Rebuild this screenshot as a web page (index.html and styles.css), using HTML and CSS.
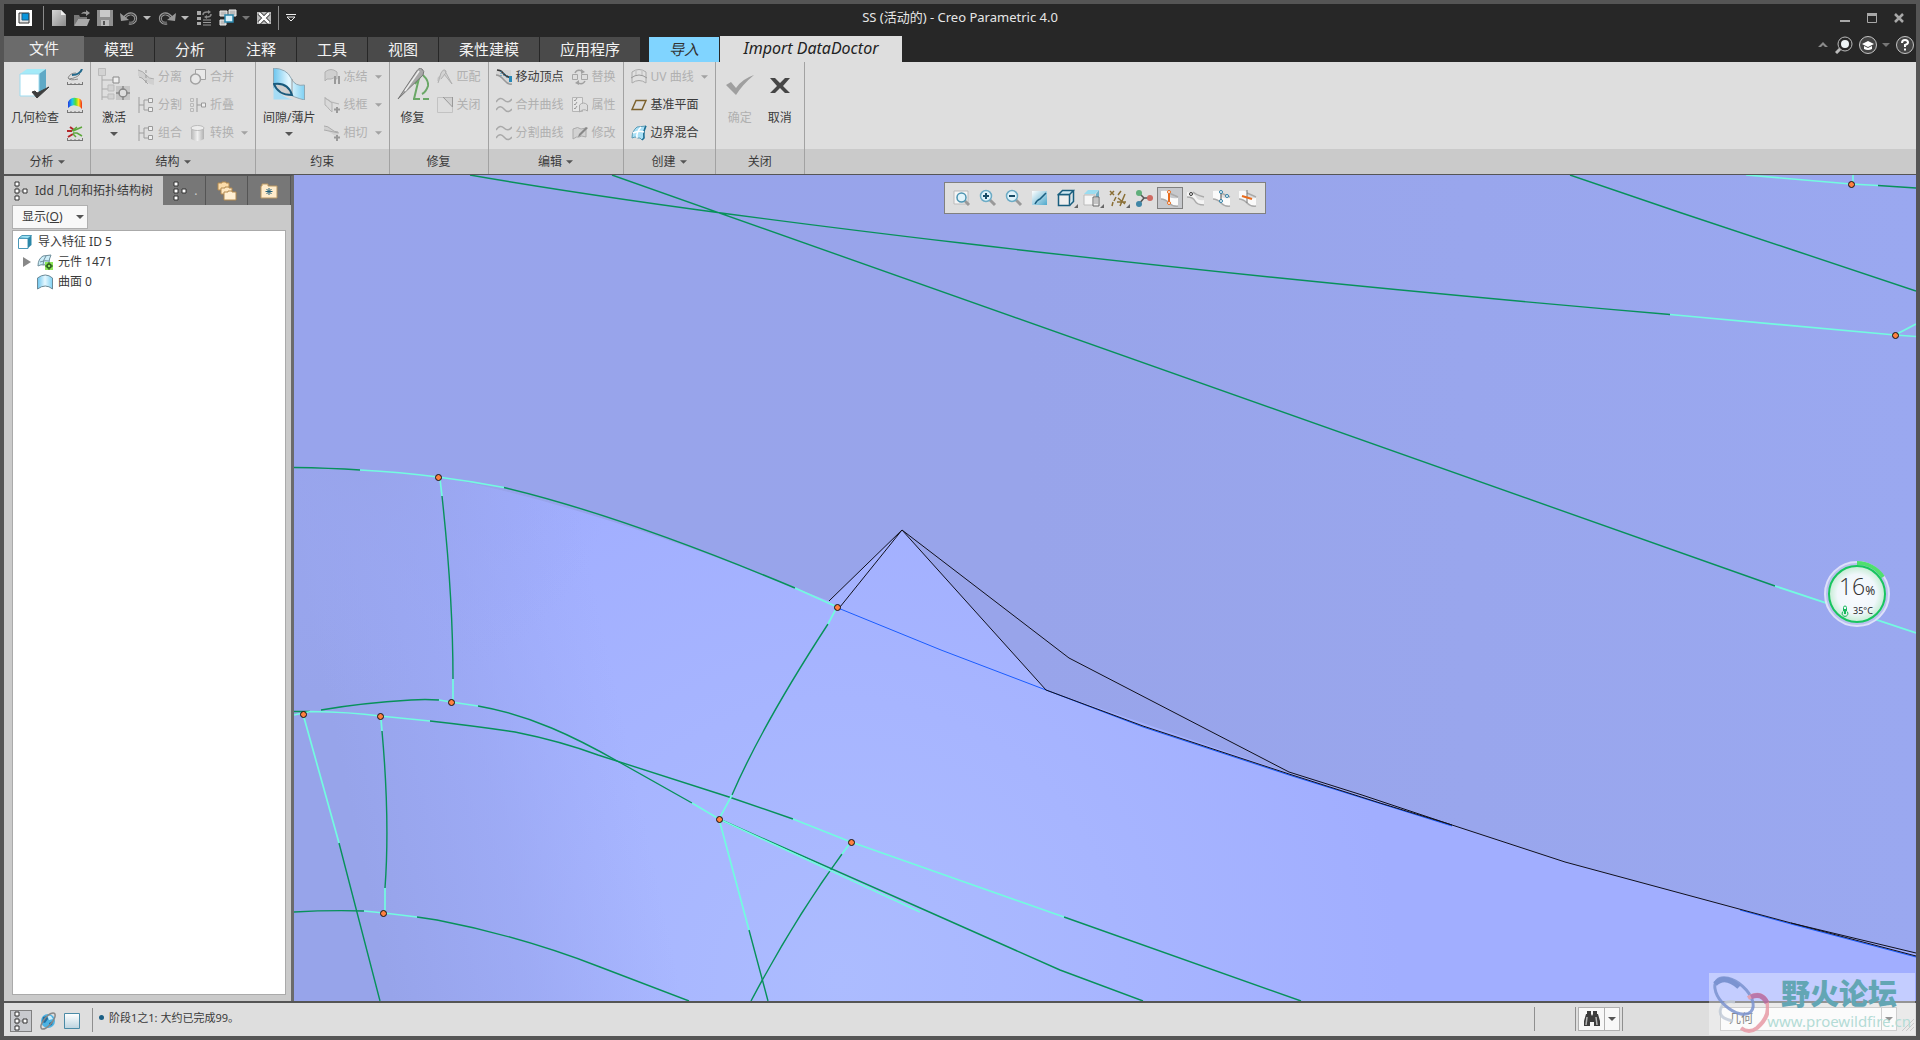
FILE: index.html
```html
<!DOCTYPE html>
<html lang="zh-CN">
<head>
<meta charset="utf-8">
<title>SS (活动的) - Creo Parametric 4.0</title>
<link rel="stylesheet" href="styles.css">
</head>
<body>
<svg class="defs" aria-hidden="true">
  <defs>
    <linearGradient id="g-sky" x1="0" x2="1"><stop offset="0" stop-color="#6cc5ee"/><stop offset=".5" stop-color="#e6f8ff"/><stop offset="1" stop-color="#7fd0f2"/></linearGradient>
    <linearGradient id="g-rain" x1="0" x2="1"><stop offset="0" stop-color="#2038e0"/><stop offset=".3" stop-color="#18c8f0"/><stop offset=".55" stop-color="#58e030"/><stop offset=".75" stop-color="#ffe020"/><stop offset="1" stop-color="#f02818"/></linearGradient>
    <linearGradient id="g-gray" x1="0" x2="1"><stop offset="0" stop-color="#b5b5b5"/><stop offset=".5" stop-color="#f0f0f0"/><stop offset="1" stop-color="#b0b0b0"/></linearGradient>
    <linearGradient id="g-doc" x1="0" y1="0" x2="1" y2="1"><stop offset="0" stop-color="#d6d6d6"/><stop offset="1" stop-color="#8c8c8c"/></linearGradient>
    <linearGradient id="g-pane" x1="0" y1="0" x2="0" y2="1"><stop offset="0" stop-color="#fff"/><stop offset="1" stop-color="#bcd3df"/></linearGradient>
    <linearGradient id="g-paint" x1="0" y1="0" x2="1" y2="1"><stop offset="0" stop-color="#fff"/><stop offset="1" stop-color="#4fa9cc"/></linearGradient>
  </defs>
  <symbol id="arrow" viewBox="0 0 8 4"><path d="M0 0h8L4 4z" fill="currentColor"/></symbol>
  <symbol id="app" viewBox="0 0 16 16"><path d="M0 0h16v16H0z" fill="#fff"/><path d="M3 3h10v10H3z" fill="#e4e4e4" stroke="#333"/><path d="M6 3.500h6.500V10H6z" fill="#0a96dc" stroke="#1c5f86"/></symbol>
  <symbol id="new" viewBox="0 0 16 16"><path d="M1 0h9l5 5v11H1z" fill="url(#g-doc)"/><path d="M10 0v5h5z" fill="#eee"/></symbol>
  <symbol id="open" viewBox="0 0 16 16"><path d="M0 5h5l1 2h7v2H4L1 15H0z" fill="#777"/><path d="M4 9h12l-3 7H0z" fill="#a9a9a9"/><path d="M7 4q2-3 5-2V0l4 3-4 3V4q-2-1-5 0z" fill="#999"/></symbol>
  <symbol id="save" viewBox="0 0 16 16"><path d="M0 0h16v16H0z" fill="#8f8f8f"/><path d="M3 0h10v7H3z" fill="#c9c9c9"/><path d="M4 10h8v6H4z" fill="#bcbcbc"/><path d="M6 11h2v4H6z" fill="#555"/></symbol>
  <symbol id="undo" viewBox="0 0 18 16"><path d="M4 8Q8 3 12 4q5 2 3 7-2 3-6 2" fill="none" stroke="#999" stroke-width="3"/><path d="M4 8Q8 3 12 4q5 2 3 7-2 3-6 2" fill="none" stroke="#333" stroke-width="1"/><path d="M0 3l1 8 8-1z" fill="#999"/></symbol>
  <symbol id="regen" viewBox="0 0 16 16"><path d="M1 1h4v4H1zM1 7h4v3H1zM1 12h4v3H1z" fill="#aaa"/><path d="M7 10h8M7 12.500h8M7 15h8" stroke="#999"/><path d="M7 5q0-3 4-3h2M15 4q0 3-4 3" fill="none" stroke="#8b8b8b" stroke-width="1.500"/><path d="M12 0l3 2-3 2zM11 5L8 7l3 2z" fill="#8b8b8b"/></symbol>
  <symbol id="wins" viewBox="0 0 18 18"><path d="M1 2h7v5H1zM10 1h7v6h-7zM1 11h6v5H1z" fill="#bbb" stroke="#eee"/><path d="M6 6h8v7H6z" fill="#d9f1fb" stroke="#2b86ac" stroke-width="1.500"/></symbol>
  <symbol id="closew" viewBox="0 0 14 14"><path d="M0 1h14v12H0z" fill="#bbb"/><path d="M2 2l10 10M12 2L2 12" stroke="#222" stroke-width="4"/><path d="M2 2l10 10M12 2L2 12" stroke="#fff" stroke-width="2.500"/></symbol>
  <symbol id="custom" viewBox="0 0 10 8"><path d="M0 .5h10" stroke="#eee"/><path d="M1 3h8L5 7z" fill="none" stroke="#eee"/></symbol>

  <symbol id="check3d" viewBox="0 0 32 32"><path d="M1 6l7-5h19l-7 5z" fill="#a4eaf8"/><path d="M20 6l7-5v19l-7 8z" fill="#5fa9c6"/><path d="M1 6h19v22H1z" fill="#fff" stroke="#9edcf0"/><path d="M13 24l5 6L30 19l-12 6-2-2z" fill="#3d3d3d" stroke="#3d3d3d"/></symbol>
  <symbol id="ruler1" viewBox="0 0 16 16"><path d="M0 15.500h16M.5 13v2M4 14v1M8 14v1M12 14v1M15.500 13v2" stroke="#777"/><path d="M1 9Q3 4 9 4M2 10q8-1 11-5M1 9q2 3 10 1" fill="none" stroke="#888"/><path d="M5 6q8 0 10-6" fill="none" stroke="#23698c" stroke-width="2"/></symbol>
  <symbol id="ruler2" viewBox="0 0 16 16"><path d="M0 15.500h16M.5 13v2M4 14v1M8 14v1M12 14v1M15.500 13v2" stroke="#777"/><path d="M1 11V5q3-5 8-4 6 0 6 5v6q-2-3-5-3-5-2-9 2z" fill="url(#g-rain)"/></symbol>
  <symbol id="ruler3" viewBox="0 0 16 16"><path d="M0 15.500h16M.5 13v2M4 14v1M8 14v1M12 14v1M15.500 13v2" stroke="#777"/><path d="M0 6h5M3 2l4 3M1 12l5-3" stroke="#b3262a" stroke-width="2"/><path d="M5 6l5-4M6 6l9-4M6 8h4l5 3M6 9l3 3" fill="none" stroke="#5da83c" stroke-width="1.500"/></symbol>
  <symbol id="activate" viewBox="0 0 32 32"><path d="M4 8v24M4 12h11M4 21h6M4 29h6" fill="none" stroke="#aaa"/><path d="M.5.5h7v7h-7zM10 17h6v6h-6zM10 26h6v5h-6z" fill="#d2d2d2" stroke="#bbb"/><path d="M15 9h6v6h-6z" fill="#eee" stroke="#888"/><path d="M18 18h14v14H18z" fill="#c6c6c6"/><circle cx="25" cy="25" r="4" fill="#ddd" stroke="#888" stroke-width="1.500"/><path d="M25 18v4M25 28v4M18 25h4M28 25h4" stroke="#888" stroke-width="1.500"/></symbol>
  <symbol id="quilt" viewBox="0 0 16 16"><path d="M0 1q5 1 8 5t8 5v5q-4 0-7-3L4 9Q2 7 0 7z" fill="#d0d0d0"/><path d="M0 1q5 1 8 5t8 4M1 8q3 0 6 4l3 3" fill="none" stroke="#aaa"/><path d="M8 1v15" stroke="#999" stroke-dasharray="3 2"/></symbol>
  <symbol id="split" viewBox="0 0 16 16"><path d="M1 0v16M1 8h5M6 3v10M6 3h4M6 13h4" fill="none" stroke="#9c9c9c"/><path d="M10.500 1.500h4v4h-4zM10.500 10.500h4v4h-4z" fill="#eee" stroke="#999"/></symbol>
  <symbol id="fold" viewBox="0 0 16 16"><path d="M.5 1.500h3v3h-3zM.5 6.500h3v3h-3zM.5 11.500h3v3h-3z" fill="none" stroke="#b8b8b8"/><path d="M7 1v14M7 8h5" stroke="#999"/><path d="M11.500 6h4v4h-4z" fill="#eee" stroke="#999"/></symbol>
  <symbol id="union" viewBox="0 0 16 16"><path d="M5.500.5h10v10h-10z" fill="#e8e8e8" stroke="#a2a2a2"/><circle cx="5.500" cy="10" r="5" fill="#e8e8e8" stroke="#a2a2a2" stroke-width="1.500"/></symbol>
  <symbol id="cyl" viewBox="0 0 16 16"><path d="M1 3v11q7 4 13 0V3z" fill="url(#g-gray)"/><ellipse cx="7.500" cy="3" rx="6.500" ry="2.500" fill="#ececec" stroke="#bbb"/></symbol>
  <symbol id="gap" viewBox="0 0 32 32"><path d="M.5 0Q14 1 18 10t13.500 7v15Q20 29 16 26q-8-3-15.500-6z" fill="url(#g-sky)" stroke="#8fa7b3"/><path d="M.5 17v14.500H22Q9 31 .5 17z" fill="#a5dcf5"/><path d="M19 11v15" stroke="#9a9a9a"/><path d="M1 16q14-2 18 11Q5 27 1 16z" fill="#cfcfcf" stroke="#195a7d" stroke-width="2"/></symbol>
  <symbol id="freeze" viewBox="0 0 16 16"><path d="M1 3q6-5 12 0v7q-4-2-6 0H3l-2 2z" fill="#cfcfcf" stroke="#b0b0b0"/><path d="M10 7h2v8h-2zM14 7h2v8h-2z" fill="#9a9a9a"/></symbol>
  <symbol id="wire" viewBox="0 0 16 16"><path d="M1 0v8q2 1 4 4l3 3V6Q5 3 1 1l6 4 8 2" fill="#d9d9d9" stroke="#b3b3b3"/><path d="M10 12.500h6M13 10v6" stroke="#999" stroke-width="2"/></symbol>
  <symbol id="tangent" viewBox="0 0 16 16"><path d="M0 1q4 0 7 3t7 3v4q-4 0-7-3T0 5z" fill="#d0d0d0"/><path d="M0 5l15 3M0 1q4 0 7 3t7 3" fill="none" stroke="#aaa"/><path d="M10 12.500h6M13 10v6" stroke="#999" stroke-width="2"/></symbol>
  <symbol id="repair" viewBox="0 0 32 32"><path d="M23 5q9 6 8 13-2 6-6 8M23 6l-6 25" fill="none" stroke="#6aa766" stroke-width="2"/><path d="M16 31h7M26 31h6M18 16l6-8" stroke="#6aa766" stroke-width="2"/><path d="M1 31L19 4q3-5 6-3t1 6z" fill="#a8a8a8" stroke="#777"/><path d="M22 3L8 23" stroke="#eee" stroke-width="1.500"/></symbol>
  <symbol id="match" viewBox="0 0 16 16"><path d="M1 14L4 4q2-4 4-3t0 4l-4 5M7 5l8 10L8 2" fill="#d2d2d2" stroke="#b0b0b0"/><path d="M4 6q-4 2-3 6" fill="none" stroke="#b8b8b8"/></symbol>
  <symbol id="closebox" viewBox="0 0 16 16"><path d="M.5.5h15v15H.5z" fill="#ddd" stroke="#c2c2c2"/><path d="M6 0h10v10z" fill="#d0d0d0"/><path d="M6 0l9.500 10V0z" fill="none" stroke="#999"/></symbol>
  <symbol id="vertex" viewBox="0 0 16 16"><path d="M0 1h15v14q-4-1-7-4T0 7z" fill="#d5d5d5"/><path d="M0 6q4 0 8 5t8 4" fill="none" stroke="#999" stroke-width="1.500"/><path d="M1 1q4 0 6 3t8 5" fill="none" stroke="#3a3a3a" stroke-width="1.500"/><path d="M5 2v5M8 4v4M11 6v4" stroke="#2983b0" stroke-dasharray="1 1"/><path d="M13 7h3v6h-3z" fill="#2588b8"/></symbol>
  <symbol id="curves" viewBox="0 0 16 16"><path d="M0 5q4-6 8-2t8-1M0 13q4-6 8-1t8 0" fill="none" stroke="#a9a9a9" stroke-width="1.500"/></symbol>
  <symbol id="replace" viewBox="0 0 16 16"><path d="M.5 5.500h5v5h-5zM9.500 5.500h6v5h-6z" fill="#ddd" stroke="#a7a7a7"/><path d="M3 4q2-4 7-2M13 12q-2 4-7 2" fill="none" stroke="#a0a0a0" stroke-width="1.500"/><path d="M9 0l4 3-4 2zM7 11l-4 3 4 2z" fill="#a0a0a0"/></symbol>
  <symbol id="props" viewBox="0 0 16 16"><path d="M.5.5h10v14H.5z" fill="#e6e6e6" stroke="#b5b5b5"/><path d="M2 3l1 1 2-3M2 7l1 1 2-3M2 11l1 1 2-3" fill="none" stroke="#999"/><path d="M7.500 8q4-4 8 0v6q-4-3-8 1z" fill="#ddd" stroke="#aaa"/></symbol>
  <symbol id="modify" viewBox="0 0 16 16"><path d="M1 4q5-3 8 0l5-1v9q-5-2-7 0-2-1-6 2z" fill="#d2d2d2" stroke="#aaa"/><path d="M16 3L8 11l-2 1 1-3 7-7z" fill="#888"/></symbol>
  <symbol id="uv" viewBox="0 0 16 16"><path d="M1 3q7-5 14 0v11q-7-5-14 0z" fill="#e0e0e0" stroke="#aaa"/><path d="M0 9q8-6 16 0" fill="none" stroke="#999"/><path d="M5 2v4M11 2v4" stroke="#bbb"/></symbol>
  <symbol id="plane" viewBox="0 0 16 16"><path d="M5 3.500h10L11 12.500H1z" fill="none" stroke="#7d622d" stroke-width="1.500"/></symbol>
  <symbol id="blend" viewBox="0 0 16 16"><path d="M1 13q0-7 5-11l9-1q-3 5-2 12l-2 2q-2-3-4-2l-3-1z" fill="#a9e0f6" stroke="#5b9ab4"/><path d="M15 1q-3 5-2 12l-2 2" fill="none" stroke="#1d6d92" stroke-width="1.500"/><path d="M2 8q6-3 11-1M6 13Q5 7 10 2" fill="none" stroke="#fff" stroke-width="1.500"/></symbol>
  <symbol id="ok" viewBox="0 0 32 32"><path d="M2 17l5-3 5 6Q18 11 30 7 19 16 12 27z" fill="#9f9f9f"/></symbol>
  <symbol id="cancel" viewBox="0 0 32 32"><path d="M6 10h5l5 5 5-5h5l-7 8 7 7h-5l-5-5-5 5H6l7-7z" fill="#454545"/></symbol>

  <symbol id="tree" viewBox="0 0 16 20"><path d="M4 3v14M4 10h7" stroke="#888"/><path d="M2 1h4v4H2zM2 8h4v4H2zM10 8h4v4h-4zM2 15h4v4H2z" fill="#fff" stroke="#333"/></symbol>
  <symbol id="folders" viewBox="0 0 20 20"><path d="M1 2h4V1h4v1h3v7H1z" fill="#fbdcaa" stroke="#b38a50"/><path d="M4 7h4V6h4v1h3v6H4z" fill="#fde6c0" stroke="#b38a50"/><path d="M7 11h4v-1h4v1h4v8H7z" fill="#ffefd3" stroke="#b38a50"/></symbol>
  <symbol id="fav" viewBox="0 0 18 16"><path d="M1 3h1V1h6v2h9v12H1z" fill="#ffeccb" stroke="#b99763"/><path d="M9 5v7M5.500 8.500h7M6.500 6l5 5M11.500 6l-5 5" stroke="#23617c"/></symbol>
  <symbol id="cube" viewBox="0 0 14 14"><path d="M.5 3.500h9.500v10H.5z" fill="#fff" stroke="#4a98b8"/><path d="M1 3l3-2.500h9.500L10 3.500z" fill="#9be2f5" stroke="#4a98b8"/><path d="M10 3.500L13.500.5V10L10 13z" fill="#2b87a8"/></symbol>
  <symbol id="part" viewBox="0 0 16 16"><path d="M1 12q0-7 5-10l8-1q-2 4-2 8l-5 2q-3-1-6 1z" fill="#cdeef9" stroke="#6d8d9a"/><path d="M3 8q5-2 9-1M6 11Q6 6 9 2" fill="none" stroke="#6d8d9a"/><path d="M8 8h8v8H8z" fill="#8fe65a"/><circle cx="12" cy="12" r="2" fill="none" stroke="#2b5c1c" stroke-width="1.500"/><path d="M12 8v2M12 14v2M8 12h2M14 12h2" stroke="#2b5c1c"/></symbol>
  <symbol id="surf" viewBox="0 0 16 16"><path d="M.5 4q8-6 15 0v11q-7-6-15 0z" fill="url(#g-sky)" stroke="#6b8997"/></symbol>

  <symbol id="zfit" viewBox="0 0 18 18"><path d="M1 2h14v13H1z" fill="#f5f5f5" stroke="#bbb"/><path d="M12 12l4 4" stroke="#999" stroke-width="3"/><circle cx="8.500" cy="8.500" r="4.500" fill="#e2f4fa" stroke="#4b93b0" stroke-width="1.500"/></symbol>
  <symbol id="zin" viewBox="0 0 18 18"><path d="M10 10l6 6" stroke="#999" stroke-width="3"/><circle cx="7" cy="7" r="5.500" fill="#dff3fb" stroke="#6cabc5" stroke-width="1.500"/><path d="M4 7h6M7 4v6" stroke="#174b66" stroke-width="2"/></symbol>
  <symbol id="zout" viewBox="0 0 18 18"><path d="M10 10l6 6" stroke="#999" stroke-width="3"/><circle cx="7" cy="7" r="5.500" fill="#dff3fb" stroke="#6cabc5" stroke-width="1.500"/><path d="M4 7h6" stroke="#174b66" stroke-width="2"/></symbol>
  <symbol id="paint" viewBox="0 0 18 18"><path d="M1 2h15v14H1z" fill="url(#g-paint)"/><path d="M4 15q2-4 5-5l6-6" fill="none" stroke="#1b5e80" stroke-width="1.500"/></symbol>
  <symbol id="shade" viewBox="0 0 18 18"><path d="M1.500 5.500h11v11h-11z" fill="#eee" stroke="#195e7e" stroke-width="1.500"/><path d="M1.500 5.500l4-4h11l-4 4zM12.500 16.500l4-4v-11" fill="#cfe9f3" stroke="#195e7e" stroke-width="1.500"/></symbol>
  <symbol id="views" viewBox="0 0 18 18"><path d="M1 6h11v10H1z" fill="#f5f5f5" stroke="#bbb"/><path d="M1 5l4-4h11l-4 4z" fill="#9adcf0"/><path d="M13 5l3-4v9h-3z" fill="#6fb0c8"/><path d="M10 8h6v9h-6z" fill="#eee" stroke="#666"/><path d="M11 10h4M11 12h4M11 14h4" stroke="#999"/></symbol>
  <symbol id="datum" viewBox="0 0 18 18"><path d="M1 2l4 4M5 2L1 6M12 2L9 6M7 8l-2 4M4 13l-1 4M16 5l-5 12M9 9l7 6M8 13h9" stroke="#8a6f35" stroke-width="1.500"/></symbol>
  <symbol id="spin" viewBox="0 0 18 18"><path d="M4 4l5 5-5 6M9 9h6" fill="none" stroke="#555" stroke-width="1.500"/><circle cx="4" cy="4" r="3" fill="#5fae7a"/><circle cx="4" cy="15" r="3" fill="#3f86a6"/><circle cx="15" cy="9" r="3" fill="#cf6a62"/></symbol>
  <symbol id="sf" viewBox="0 0 18 18"><path d="M0 2q5-1 8 1v5q4 2 9 1v8q-5 0-9-3-4-4-8-4z" fill="#fafafa"/><path d="M0 10q4 0 8 4t9 3M8 4l9 4" fill="none" stroke="#aaa" stroke-width="1.500"/></symbol>
  <symbol id="sf1" viewBox="0 0 18 18"><use href="#sf"/><path d="M8 3v11" stroke="#e96b1b" stroke-width="2"/><circle cx="8" cy="3" r="1.500" fill="#fff" stroke="#e96b1b"/><circle cx="8" cy="14" r="1.500" fill="#fff" stroke="#e96b1b"/></symbol>
  <symbol id="sf2" viewBox="0 0 18 18"><path d="M0 3q7 1 9 5t8 3v6q-5 0-8-4T0 8z" fill="#f4f4f4"/><path d="M0 8q6 0 8 4t9 4M6 3q3 3 11 5" fill="none" stroke="#aaa" stroke-width="1.500"/><circle cx="4" cy="5" r="1.500" fill="none" stroke="#333"/></symbol>
  <symbol id="sf3" viewBox="0 0 18 18"><use href="#sf"/><path d="M8 2v10" stroke="#4d4d4d"/><circle cx="8" cy="3" r="1.500" fill="#fff" stroke="#2d7fa6"/><circle cx="8" cy="12" r="1.500" fill="#fff" stroke="#2d7fa6"/><circle cx="14" cy="7" r="1.500" fill="#fff" stroke="#2d7fa6"/></symbol>
  <symbol id="sf4" viewBox="0 0 18 18"><use href="#sf"/><path d="M8 1v13" stroke="#777"/><path d="M3 7l10 3" stroke="#e96b1b" stroke-width="2"/></symbol>
  <symbol id="globe" viewBox="0 0 18 18"><circle cx="9" cy="9" r="7" fill="#4cb2e2"/><path d="M4 5l4-1 1 3-3 4-3-1zM10 11l4-2-1 4-3 1z" fill="#1f6fa3"/><path d="M8 3l4 1 2 3-4 1z" fill="#cdeefb"/><ellipse cx="9" cy="9" rx="10" ry="4" transform="rotate(-50 9 9)" fill="none" stroke="#888" stroke-width="1.500"/></symbol>
  <symbol id="bino" viewBox="0 0 18 16"><path d="M4 0h4v3H4zM10 0h4v3h-4zM3 3h5l1 2 1-2h5l2 7v5h-6v-4H7v4H1v-5z" fill="#3c3c3c"/><path d="M4 6l-1 8M13 6l1 8" stroke="#b5b5b5" stroke-width="1.500"/></symbol>
</svg>

<div class="app">
  <header class="titlebar">
    <div class="quick">
      <svg class="s16 logo"><use href="#app"/></svg>
      <span class="vsep"></span>
      <button class="q" aria-label="新建"><svg class="s16"><use href="#new"/></svg></button>
      <button class="q" aria-label="打开"><svg class="s16"><use href="#open"/></svg></button>
      <button class="q" aria-label="保存"><svg class="s16"><use href="#save"/></svg></button>
      <button class="q" aria-label="撤消"><svg class="s18"><use href="#undo"/></svg><svg class="arr lt"><use href="#arrow"/></svg></button>
      <button class="q" aria-label="重做"><svg class="s18 flip"><use href="#undo"/></svg><svg class="arr lt"><use href="#arrow"/></svg></button>
      <button class="q" aria-label="重新生成"><svg class="s16"><use href="#regen"/></svg></button>
      <button class="q" aria-label="窗口"><svg class="s18"><use href="#wins"/></svg><svg class="arr dk"><use href="#arrow"/></svg></button>
      <button class="q" aria-label="关闭窗口"><svg class="s14"><use href="#closew"/></svg></button>
      <span class="vsep"></span>
      <button class="q" aria-label="自定义快速访问工具栏"><svg class="s10"><use href="#custom"/></svg></button>
    </div>
    <h1 class="title">SS (活动的) - Creo Parametric 4.0</h1>
    <div class="winctl">
      <button aria-label="最小化"><svg viewBox="0 0 10 10"><path d="M0 8h10" stroke="#a8a8a8" stroke-width="2"/></svg></button>
      <button aria-label="最大化"><svg viewBox="0 0 10 10"><path d="M.5 1h9v8.500h-9z" fill="none" stroke="#a8a8a8"/><path d="M0 1.500h10" stroke="#a8a8a8" stroke-width="3"/></svg></button>
      <button aria-label="关闭"><svg viewBox="0 0 10 10"><path d="M1 1l8 8M9 1L1 9" stroke="#a8a8a8" stroke-width="2.500"/></svg></button>
    </div>
  </header>

  <nav class="tabs">
    <button class="tab file">文件</button>
    <button class="tab">模型</button>
    <button class="tab">分析</button>
    <button class="tab">注释</button>
    <button class="tab">工具</button>
    <button class="tab">视图</button>
    <button class="tab wide">柔性建模</button>
    <button class="tab wide">应用程序</button>
    <button class="tab import">导入</button>
    <button class="tab active">Import DataDoctor</button>
    <div class="helpers">
      <button aria-label="最小化功能区"><svg class="s12" viewBox="0 0 12 12"><path d="M1 8l5-5 5 5H8L6 6 4 8z" fill="#8b8b8b"/></svg></button>
      <button aria-label="搜索"><svg class="s18" viewBox="0 0 18 18"><path d="M1 17l5-5" stroke="#bbb" stroke-width="3"/><circle cx="10" cy="8" r="7" fill="#272727" stroke="#bbb"/><circle cx="10" cy="8" r="4" fill="#eef4f6"/></svg></button>
      <button aria-label="学习"><svg class="s18" viewBox="0 0 18 18"><circle cx="9" cy="9" r="8.500" fill="#444" stroke="#c4c4c4"/><path d="M3 8l6-3 6 3-6 3zM5 10v3q4 2 8 0v-3l-4 2z" fill="#fff"/></svg><svg class="arr dk"><use href="#arrow"/></svg></button>
      <button aria-label="帮助"><svg class="s18" viewBox="0 0 18 18"><circle cx="9" cy="9" r="8.500" fill="#444" stroke="#c4c4c4"/><path d="M6 7q0-3 3-3t3 2.500Q12 8 9 9v2" fill="none" stroke="#fff" stroke-width="2"/><path d="M8 12.500h2v2H8z" fill="#fff"/></svg></button>
    </div>
  </nav>

  <section class="ribbon">
    <div class="group">
      <div class="body">
        <button class="big"><svg class="s32"><use href="#check3d"/></svg>几何检查</button>
        <div class="col">
          <button class="sm" aria-label="曲率"><svg class="s16"><use href="#ruler1"/></svg></button>
          <button class="sm" aria-label="着色曲率"><svg class="s16"><use href="#ruler2"/></svg></button>
          <button class="sm" aria-label="连接"><svg class="s16"><use href="#ruler3"/></svg></button>
        </div>
      </div>
      <div class="label">分析<svg class="arr"><use href="#arrow"/></svg></div>
    </div>
    <div class="group">
      <div class="body">
        <button class="big"><svg class="s32"><use href="#activate"/></svg>激活<svg class="arr"><use href="#arrow"/></svg></button>
        <div class="col">
          <button class="sm" disabled><svg class="s16"><use href="#quilt"/></svg>分离</button>
          <button class="sm" disabled><svg class="s16"><use href="#split"/></svg>分割</button>
          <button class="sm" disabled><svg class="s16"><use href="#split"/></svg>组合</button>
        </div>
        <div class="col">
          <button class="sm" disabled><svg class="s16"><use href="#union"/></svg>合并</button>
          <button class="sm" disabled><svg class="s16"><use href="#fold"/></svg>折叠</button>
          <button class="sm" disabled><svg class="s16"><use href="#cyl"/></svg>转换<svg class="arr"><use href="#arrow"/></svg></button>
        </div>
      </div>
      <div class="label">结构<svg class="arr"><use href="#arrow"/></svg></div>
    </div>
    <div class="group">
      <div class="body">
        <button class="big"><svg class="s32"><use href="#gap"/></svg>间隙/薄片<svg class="arr"><use href="#arrow"/></svg></button>
        <div class="col">
          <button class="sm" disabled><svg class="s16"><use href="#freeze"/></svg>冻结<svg class="arr"><use href="#arrow"/></svg></button>
          <button class="sm" disabled><svg class="s16"><use href="#wire"/></svg>线框<svg class="arr"><use href="#arrow"/></svg></button>
          <button class="sm" disabled><svg class="s16"><use href="#tangent"/></svg>相切<svg class="arr"><use href="#arrow"/></svg></button>
        </div>
      </div>
      <div class="label">约束</div>
    </div>
    <div class="group">
      <div class="body">
        <button class="big"><svg class="s32"><use href="#repair"/></svg>修复</button>
        <div class="col">
          <button class="sm" disabled><svg class="s16"><use href="#match"/></svg>匹配</button>
          <button class="sm" disabled><svg class="s16"><use href="#closebox"/></svg>关闭</button>
        </div>
      </div>
      <div class="label">修复</div>
    </div>
    <div class="group">
      <div class="body">
        <div class="col">
          <button class="sm"><svg class="s16"><use href="#vertex"/></svg>移动顶点</button>
          <button class="sm" disabled><svg class="s16"><use href="#curves"/></svg>合并曲线</button>
          <button class="sm" disabled><svg class="s16"><use href="#curves"/></svg>分割曲线</button>
        </div>
        <div class="col">
          <button class="sm" disabled><svg class="s16"><use href="#replace"/></svg>替换</button>
          <button class="sm" disabled><svg class="s16"><use href="#props"/></svg>属性</button>
          <button class="sm" disabled><svg class="s16"><use href="#modify"/></svg>修改</button>
        </div>
      </div>
      <div class="label">编辑<svg class="arr"><use href="#arrow"/></svg></div>
    </div>
    <div class="group">
      <div class="body">
        <div class="col">
          <button class="sm" disabled><svg class="s16"><use href="#uv"/></svg>UV 曲线<svg class="arr"><use href="#arrow"/></svg></button>
          <button class="sm"><svg class="s16"><use href="#plane"/></svg>基准平面</button>
          <button class="sm"><svg class="s16"><use href="#blend"/></svg>边界混合</button>
        </div>
      </div>
      <div class="label">创建<svg class="arr"><use href="#arrow"/></svg></div>
    </div>
    <div class="group">
      <div class="body finish">
        <button class="big" disabled><svg class="s32"><use href="#ok"/></svg>确定</button>
        <button class="big"><svg class="s32"><use href="#cancel"/></svg>取消</button>
      </div>
      <div class="label">关闭</div>
    </div>
    <div class="rest"><div class="label"></div></div>
  </section>

  <main class="work">
    <aside class="side">
      <div class="sidetabs">
        <button class="stab on"><svg class="s20"><use href="#tree"/></svg>Idd 几何和拓扑结构树</button>
        <button class="stab" aria-label="模型树"><svg class="s20"><use href="#tree"/></svg>.</button>
        <button class="stab" aria-label="文件夹浏览器"><svg class="s20"><use href="#folders"/></svg></button>
        <button class="stab" aria-label="收藏夹"><svg class="s18"><use href="#fav"/></svg></button>
      </div>
      <button class="show"><span>显示(<u>O</u>)</span><svg class="arr"><use href="#arrow"/></svg></button>
      <ul class="treebox">
        <li><svg class="s14"><use href="#cube"/></svg>导入特征 ID 5</li>
        <li class="sub"><svg class="tw" viewBox="0 0 8 10"><path d="M0 0l8 5-8 5z" fill="#888"/></svg><svg class="s16"><use href="#part"/></svg>元件 1471</li>
        <li class="sub"><span class="tw"></span><svg class="s16"><use href="#surf"/></svg>曲面 0</li>
      </ul>
    </aside>

    <section class="view">
      <svg class="scene" viewBox="294 175 1622 826" preserveAspectRatio="xMidYMid slice">
        <defs>
          <linearGradient id="back" x1="0" y1="0" x2="1" y2="0"><stop offset="0" stop-color="#98a4ec"/><stop offset=".45" stop-color="#98a4ea"/><stop offset="1" stop-color="#9aa8f0"/></linearGradient>
          <radialGradient id="glow" gradientUnits="userSpaceOnUse" cx="840" cy="980" r="560"><stop offset="0" stop-color="#acbcff"/><stop offset=".5" stop-color="#a7b5ff"/><stop offset="1" stop-color="#a1aeff"/></radialGradient>
          <linearGradient id="dim" gradientUnits="userSpaceOnUse" x1="340" y1="760" x2="620" y2="700"><stop offset="0" stop-color="#97a4ea"/><stop offset=".5" stop-color="#98a5ee" stop-opacity=".6"/><stop offset="1" stop-color="#9ba8f4" stop-opacity="0"/></linearGradient>
          <radialGradient id="dimtop" gradientUnits="userSpaceOnUse" cx="360" cy="440" r="260"><stop offset="0" stop-color="#98a4ea"/><stop offset="1" stop-color="#9ba8f4" stop-opacity="0"/></radialGradient>
          <clipPath id="low"><path d="M294 467Q370 468 438 477 590 505 795 588L829 601 902 530 1046 690 1289 773 1452 825 1565 862 1790 923 1916 954V1001H294z"/></clipPath>
        </defs>
        <path d="M294 175h1622v826H294z" fill="url(#back)"/>
        <g clip-path="url(#low)">
          <path d="M294 175h1622v826H294z" fill="url(#glow)"/>
          <path d="M294 175h1622v826H294z" fill="url(#dim)"/>
          <path d="M294 175h1622v826H294z" fill="url(#dimtop)"/>
        </g>
        <g class="edge">
          <path d="M294 467.500Q330 468 360 470M504 487.500C590 508 690 544 795 588"/>
          <path d="M442 496C449 560 453 620 453 679"/>
          <path d="M294 711.500H310M321 710Q361 703 411 700 425 699 439 700M478 706C530 715 575 737 619 762L692 803"/>
          <path d="M430 721Q475 726 515 732 560 741 598 755L729 797 793 819M1064 917L1301 1001"/>
          <path d="M382 731Q390 820 385 888M339 843L380 1001"/>
          <path d="M294 912Q330 910 364 911M417 917L437 920Q520 936 600 967L689 1001"/>
          <path d="M828 624C800 667 757 737 732 795M749 930L768 1001"/>
          <path d="M719 819L918 907 1060 970 1143 1001M842 854Q795 918 751 1001"/>
          <path d="M470 175C700 215 1150 270 1670 314.500M612 175L1775 586"/>
          <path d="M1570 175L1680 212.500 1793 250 1916 291M1878 185.500L1916 188"/>
        </g>
        <g class="hot">
          <path d="M360 470Q400 472 438 477 470 481 504 487.500M795 588L837 607 828 624M440 479L442 496M453 679L453 701"/>
          <path d="M439 700L451 702 478 706M294 715L303 713 311 711.500Q350 712 380 716L430 721M381 719L382 731M303 714L339 843"/>
          <path d="M364 911L384 913 417 917M385 888V911M692 803L719 819 920 912M732 795L719 819 749 930"/>
          <path d="M793 819L851 842 1064 917M851 842L842 854M1670 314.500L1895 335 1916 336.500M1895 335L1916 324"/>
          <path d="M1746 175L1851 184 1878 185.500M1853 175V184M1775 586L1916 633"/>
        </g>
        <path class="blue" d="M838 608Q940 651 1046 690L1143 727 1289 775 1452 826M1740 910L1791 924 1916 957"/>
        <path class="black" d="M829 601L902 530 840 607M1046 690L902 530 1069 658 1289 772 1362 795 1452 825 1565 862 1791 923 1916 953M1046 690L1143 726 1289 774 1380 803 1452 825M1791 923L1916 956"/>
        <g class="node">
          <circle cx="438.500" cy="477.500" r="3"/><circle cx="451.500" cy="702.500" r="3"/><circle cx="303.500" cy="714.500" r="3"/><circle cx="380.500" cy="716.500" r="3"/><circle cx="383.500" cy="913.500" r="3"/><circle cx="837.500" cy="607.500" r="3"/><circle cx="719.500" cy="819.500" r="3"/><circle cx="851.500" cy="842.500" r="3"/><circle cx="1851.500" cy="184.500" r="3"/><circle cx="1895.500" cy="335.500" r="3"/>
        </g>
      </svg>

      <div class="float">
        <button aria-label="重新调整"><svg class="s18"><use href="#zfit"/></svg></button>
        <button aria-label="放大"><svg class="s18"><use href="#zin"/></svg></button>
        <button aria-label="缩小"><svg class="s18"><use href="#zout"/></svg></button>
        <button aria-label="重画"><svg class="s18"><use href="#paint"/></svg></button>
        <button class="more" aria-label="显示样式"><svg class="s18"><use href="#shade"/></svg></button>
        <button class="more" aria-label="已保存方向"><svg class="s18"><use href="#views"/></svg></button>
        <button class="more" aria-label="基准显示"><svg class="s18"><use href="#datum"/></svg></button>
        <button aria-label="旋转中心"><svg class="s18"><use href="#spin"/></svg></button>
        <button class="on" aria-label="显示顶点"><svg class="s18"><use href="#sf1"/></svg></button>
        <button aria-label="显示边"><svg class="s18"><use href="#sf2"/></svg></button>
        <button aria-label="显示间隙"><svg class="s18"><use href="#sf3"/></svg></button>
        <button aria-label="显示切线"><svg class="s18"><use href="#sf4"/></svg></button>
      </div>

      <div class="gauge">
        <svg class="ring" viewBox="0 0 66 66">
          <defs><radialGradient id="face"><stop offset="0" stop-color="#fafbff"/><stop offset=".7" stop-color="#f0f7fb"/><stop offset="1" stop-color="#c4ecd2"/></radialGradient></defs>
          <circle cx="33" cy="33" r="32" fill="#b9c0ee" stroke="#dde0fa" stroke-width="2"/>
          <path d="M33 2A31 31 0 0 1 59 16" fill="none" stroke="#4fe06e" stroke-width="4"/>
          <circle cx="33" cy="33" r="28" fill="url(#face)" stroke="#18c55f" stroke-width="2"/>
        </svg>
        <div class="reading"><span class="num">16</span>%</div>
        <div class="temp"><svg viewBox="0 0 8 12"><path d="M2.500 6V2.500a1.500 1.500 0 0 1 3 0V6a2.900 2.900 0 1 1-3 0z" fill="none" stroke="#18b85c"/><path d="M4 4v5" stroke="#18b85c" stroke-width="2"/></svg>35°C</div>
      </div>
    </section>
  </main>

  <footer class="status">
    <button class="sq" aria-label="模型树"><svg class="s20"><use href="#tree"/></svg></button>
    <button class="ib" aria-label="浏览器"><svg class="s18"><use href="#globe"/></svg></button>
    <button class="ib" aria-label="全屏"><svg class="s16" viewBox="0 0 16 16"><path d="M.5.5h15v15H.5z" fill="url(#g-pane)" stroke="#4a8aa6"/></svg></button>
    <span class="ssep"></span>
    <p class="msg">阶段1之1: 大约已完成99。</p>
    <div class="right">
      <span class="ssep"></span>
      <span class="ssep second"></span>
      <button class="find" aria-label="查找"><svg class="s18"><use href="#bino"/></svg><span class="dd"><svg class="arr"><use href="#arrow"/></svg></span></button>
      <span class="ssep"></span>
      <label class="combo"><select aria-label="选择过滤器"><option>几何</option></select><span class="dd"><svg class="arr"><use href="#arrow"/></svg></span></label>
      <svg class="grip" viewBox="0 0 12 12"><path d="M0 12L12 0M4 12l8-8M8 12l4-4" stroke="#aaa"/></svg>
    </div>
  </footer>

  <div class="mark">
    <svg class="rings" viewBox="0 0 58 60"><g fill="none"><path d="M22 47Q6 44 10 34 13 26 24 28" stroke="#c3ccd8" stroke-width="3"/><ellipse cx="23" cy="22" rx="23" ry="13" transform="rotate(42 23 22)" stroke="#7b93cf" stroke-width="3"/><path d="M4 10Q14 0 28 13" stroke="#6f8ac9" stroke-width="5"/><path d="M37 24Q50 16 56 28 60 42 46 54 38 60 30 54" stroke="#e89aa6" stroke-width="4"/><path d="M40 23Q51 18 56 29" stroke="#b86a9e" stroke-width="5"/></g></svg>
    <div class="brand">野火论坛</div>
    <div class="url">www.proewildfire.cn</div>
  </div>
</div>
</body>
</html>
```
FILE: styles.css
```css
* { box-sizing: border-box; }

body {
  margin: 0;
  font-family: "Noto Sans", "Noto Sans CJK SC", sans-serif;
  font-size: 12px;
  line-height: 16px;
  color: #3a3a3a;
}

button {
  font: inherit;
  color: inherit;
  background: none;
  border: 0;
  padding: 0;
  margin: 0;
  display: flex;
  align-items: center;
}

svg { display: block; flex: none; }
.defs { position: absolute; width: 0; height: 0; }
.s10 { width: 10px; height: 8px; }
.s12 { width: 12px; height: 12px; }
.s14 { width: 14px; height: 14px; }
.s16 { width: 16px; height: 16px; }
.s18 { width: 18px; height: 18px; }
.s20 { width: 20px; height: 20px; }
.s32 { width: 32px; height: 32px; }
.flip { transform: scaleX(-1); }
.arr { width: 8px; height: 4px; color: #555; }
.arr.lt { color: #bbb; }
.arr.dk { color: #777; }

.app {
  position: relative;
  display: flex;
  flex-direction: column;
  min-height: 100vh;
  border: 4px solid #555;
  background: #555;
}

/* title bar */
.titlebar {
  display: grid;
  grid-template-columns: 1fr auto 1fr;
  height: 28px;
  background: #272727;
}
.quick { display: flex; align-items: center; padding-left: 12px; gap: 7px; }
.quick .vsep { width: 1px; height: 24px; background: #8a8a8a; }
.quick .logo { margin-right: 4px; }
.quick .q { gap: 5px; }
.title {
  margin: 0;
  font-size: 13px;
  font-weight: normal;
  line-height: 27px;
  color: #e6e6e6;
}
.winctl {
  display: flex;
  align-items: center;
  justify-content: flex-end;
  gap: 17px;
  padding: 0 12px 0 0;
}
.winctl svg { width: 10px; height: 10px; }

/* ribbon tabs */
.tabs {
  display: flex;
  align-items: flex-end;
  height: 30px;
  background: #272727;
}
.tab {
  justify-content: center;
  width: 70px;
  height: 25px;
  margin-right: 1px;
  padding-bottom: 2px;
  font-size: 15px;
  color: #f2f2f2;
  background: #4a4a4a;
}
.tab.file { width: 80px; height: 26px; margin: 0; background: #6b6b6b; }
.tab.wide { width: 100px; }
.tab.import { margin-left: 8px; font-style: italic; color: #333; background: #80d4ff; }
.tab.active { width: 182px; height: 26px; margin: 0; font-size: 16px; font-style: italic; color: #222; background: #dedede; }
.helpers {
  display: flex;
  align-items: center;
  align-self: center;
  gap: 6px;
  margin-left: auto;
  padding: 0 2px 4px 0;
}
.helpers button { gap: 5px; }

/* ribbon */
.ribbon { display: flex; background: #dedede; border-bottom: 1px solid #555; }
.group { display: flex; flex-direction: column; border-right: 1px solid #a2a2a2; }
.rest { flex: 1; display: flex; flex-direction: column; justify-content: flex-end; }
.body { display: flex; gap: 8px; height: 87px; padding: 1px 7px 0; }
.body.finish { padding: 1px 8px 0; }
.label {
  display: flex;
  align-items: center;
  justify-content: center;
  gap: 4px;
  height: 25px;
  background: #cacaca;
}
.label .arr { width: 7px; }
.col { display: flex; flex-direction: column; }
.big { flex-direction: column; min-width: 32px; padding-top: 5px; }
.big .s32 { margin-bottom: 10px; }
.big .arr { margin-top: 6px; }
.sm { gap: 4px; height: 28px; white-space: nowrap; }
.sm .arr { margin-left: 3px; width: 7px; }
button:disabled { color: #b0b0b0; }
button:disabled .arr { color: #a2a2a2; }

/* work area */
.work { flex: 1; display: flex; min-height: 400px; }
.side {
  display: flex;
  flex-direction: column;
  width: 290px;
  padding-bottom: 6px;
  background: #cacaca;
  border-top: 1px solid #555;
  border-right: 3px solid #6b6b6b;
}
.sidetabs { display: flex; height: 29px; background: #777; }
.stab { justify-content: center; gap: 4px; flex: 1; color: #ccc; border-right: 1px solid #555; }
.stab.on { flex: none; width: 159px; justify-content: flex-start; padding-left: 7px; color: #3a3a3a; background: #cacaca; border: 0; white-space: nowrap; }
.show {
  justify-content: space-between;
  width: 76px;
  height: 24px;
  margin-left: 8px;
  padding: 0 3px 0 9px;
  background: #f8f8f8;
  border: 1px solid #b0b0b0;
}
.treebox {
  flex: 1;
  margin: 1px 5px 0 8px;
  padding: 1px 5px;
  list-style: none;
  background: #fff;
  border: 1px solid #aaa;
}
.treebox li { display: flex; align-items: center; gap: 6px; height: 20px; }
.treebox .sub { padding-left: 5px; gap: 5px; }
.tw { width: 8px; height: 10px; margin-right: 1px; }

.view { position: relative; flex: 1; overflow: hidden; background: #98a4ec; }
.scene { position: absolute; inset: 0; width: 100%; height: 100%; }
.edge, .hot, .blue, .black { fill: none; }
.edge { stroke: #07915a; stroke-width: 1.4px; }
.hot { stroke: #73fbe0; stroke-width: 1.7px; }
.blue { stroke: #1a5cff; stroke-width: 1px; }
.black { stroke: #10101c; stroke-width: 1px; }
.node { fill: #ff8040; stroke: #111; stroke-width: 1px; }

.float {
  position: absolute;
  top: 7px;
  left: 50%;
  transform: translateX(-50%);
  display: flex;
  padding: 4px;
  background: #dedede;
  border: 1px solid #808080;
}
.float button { position: relative; justify-content: center; width: 26px; height: 22px; border: 1px solid transparent; }
.float .on { background: #c6c8cc; border-color: #808080; }
.more::after {
  content: "";
  position: absolute;
  right: 0;
  bottom: 0;
  border: 2px solid;
  border-color: transparent #666 #666 transparent;
}

.gauge { position: absolute; top: 386px; right: 26px; width: 66px; height: 66px; text-align: center; color: #333; }
.ring { position: absolute; inset: 0; width: 66px; height: 66px; }
.reading { position: relative; padding-top: 13px; font-size: 12px; line-height: 24px; }
.num { font-size: 23px; font-weight: 300; font-family: "Open Sans", sans-serif; }
.temp { position: relative; display: flex; justify-content: center; gap: 4px; font-size: 9px; line-height: 16px; color: #222; }
.temp svg { width: 8px; height: 12px; margin-top: 2px; }

/* status bar */
.status {
  display: flex;
  align-items: center;
  height: 35px;
  padding-left: 6px;
  background: #dedede;
  border-top: 2px solid #555;
}
.sq { justify-content: center; width: 22px; height: 22px; margin-top: 2px; background: #c8cace; border: 1px solid #808080; }
.ib { margin: 2px 0 0 7px; }
.ssep { width: 1px; height: 24px; background: #8f8f8f; }
.status > .ssep { margin-left: 12px; }
.msg { display: flex; align-items: center; gap: 5px; margin: 0 0 4px 6px; font-size: 11px; }
.msg::before { content: ""; width: 5px; height: 5px; border-radius: 50%; background: #195e84; }
.right { display: flex; align-items: center; align-self: flex-start; margin-left: auto; padding: 4px 2px 0 0; }
.second { margin: 0 2px 0 40px; }
.find { width: 42px; height: 24px; margin-right: 2px; padding-left: 4px; background: #f8f8f8; border: 1px solid #b0b0b0; justify-content: space-between; }
.dd { display: flex; align-items: center; justify-content: center; width: 15px; height: 22px; border-left: 1px solid #b0b0b0; }
.combo { display: flex; width: 177px; height: 24px; margin-left: 97px; background: #f8f8f8; border: 1px solid #b0b0b0; }
.combo select { flex: 1; appearance: none; padding: 0 0 0 8px; border: 0; background: none; font: inherit; color: #3a3a3a; }
.grip { align-self: flex-end; width: 12px; height: 12px; margin-left: 5px; }

/* forum stamp over the corner */
.mark {
  position: absolute;
  right: 1px;
  bottom: 1px;
  width: 206px;
  height: 62px;
  padding: 0 4px 0 0;
  text-align: right;
  background: rgba(255, 255, 255, .38);
  pointer-events: none;
}
.rings { position: absolute; left: 2px; top: 1px; width: 58px; height: 60px; opacity: .85; }
.brand { padding-right: 14px; font-family: "Noto Sans CJK SC", sans-serif; font-size: 29px; line-height: 38px; font-weight: 900; color: #63a6b4; }
.url { font-size: 15px; line-height: 20px; color: #b4dcd6; }
```
